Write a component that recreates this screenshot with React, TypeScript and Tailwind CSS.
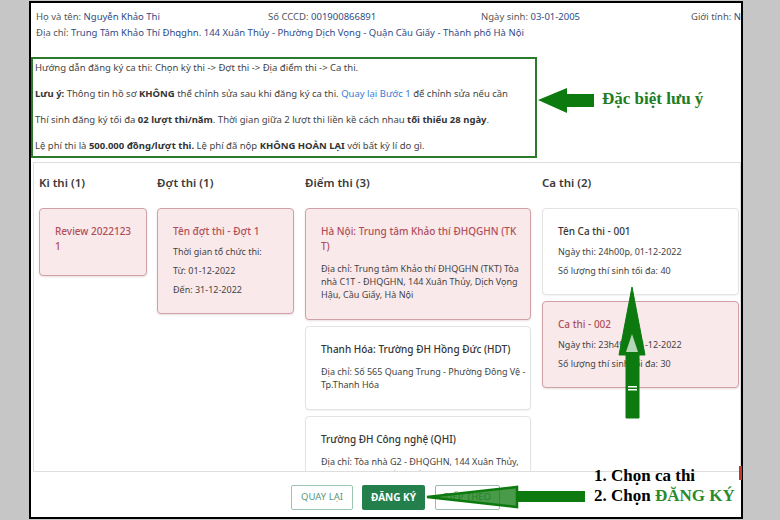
import React from 'react';
import clsx from 'clsx';

type CardProps = {
  title: React.ReactNode;
  lines?: React.ReactNode[];
  active?: boolean;
  loose?: boolean;
  className?: string;
};

function Card({ title, lines = [], active, loose, className }: CardProps) {
  return (
    <div
      className={clsx(
        'rounded-[4px] border px-[15px] pt-[15px] whitespace-nowrap',
        loose ? 'pb-[18px]' : 'pb-[17px]',
        active
          ? 'bg-[#f9e9eb] border-[#cfa1a7] shadow-[0_1px_2px_rgba(120,40,50,0.15)]'
          : 'bg-white border-[#e3e3e3] shadow-[0_1px_2px_rgba(0,0,0,0.06)]',
        className,
      )}
    >
      <div
        className={clsx(
          'text-[10px] leading-[15px] font-medium',
          active ? 'text-[#b04f59]' : 'text-[#353535]',
        )}
      >
        {title}
      </div>
      {lines.map((l, i) => (
        <p key={i} className={clsx('text-[9px] leading-[13px] text-[#444]', loose ? 'mt-[8px]' : 'mt-[6px]')}>
          {l}
        </p>
      ))}
    </div>
  );
}

function Column({ label, width, children }: { label: string; width: string; children: React.ReactNode }) {
  return (
    <div className={clsx('flex flex-col shrink-0', width)}>
      <div className="h-[16px] leading-[16px] text-[11.5px] font-semibold text-[#3a3a3a]">{label}</div>
      <div className="mt-[17px] flex flex-col gap-[6px]">{children}</div>
    </div>
  );
}

export default function App() {
  return (
    <div className="relative w-[780px] h-[520px] overflow-hidden bg-[#c6c6c6] pl-[29px] pt-px font-['Noto_Sans','Open_Sans',sans-serif]">
      <div className="w-[714px] h-[518px] border-2 border-black bg-white flex flex-col overflow-hidden">
        {/* thông tin thí sinh */}
        <div className="pt-[6px] pl-[5px] text-[9.5px] leading-[16px] text-[#555] whitespace-nowrap overflow-hidden">
          <div className="flex">
            <div className="w-[232px] shrink-0">
              Họ và tên: <span className="text-[#2f4a86]">Nguyễn Khảo Thi</span>
            </div>
            <div className="w-[213px] shrink-0">
              Số CCCD: <span className="text-[#2f4a86]">001900866891</span>
            </div>
            <div className="w-[210px] shrink-0">
              Ngày sinh: <span className="text-[#2f4a86]">03-01-2005</span>
            </div>
            <div className="shrink-0">
              Giới tính: <span className="text-[#2f4a86]">Nam</span>
            </div>
          </div>
          <div>
            Địa chỉ:{' '}
            <span className="text-[#2f4a86]">
              Trung Tâm Khảo Thí Đhqghn. 144 Xuân Thủy - Phường Dịch Vọng - Quận Cầu Giấy - Thành phố Hà Nội
            </span>
          </div>
        </div>

        {/* hướng dẫn */}
        <div className="mt-[16px] w-[506px] border-2 border-[#2c7a2c] pl-[2px] pt-[2px] pb-[3px] flex flex-col gap-[12px] text-[9.5px] leading-[14px] text-[#444] whitespace-nowrap">
          <p>Hướng dẫn đăng ký ca thi: Chọn kỳ thi -&gt; Đợt thi -&gt; Địa điểm thi -&gt; Ca thi.</p>
          <p>
            <b className="text-[#333]">Lưu ý:</b> Thông tin hồ sơ <b className="text-[#333]">KHÔNG</b> thể chỉnh sửa sau
            khi đăng ký ca thi. <span className="text-[#3a7bd5]">Quay lại Bước 1</span> để chỉnh sửa nếu cần
          </p>
          <p>
            Thí sinh đăng ký tối đa <b className="text-[#333]">02 lượt thi/năm</b>. Thời gian giữa 2 lượt thi liền kề cách
            nhau <b className="text-[#333]">tối thiểu 28 ngày</b>.
          </p>
          <p>
            Lệ phí thi là <b className="text-[#333]">500.000 đồng/lượt thi.</b> Lệ phí đã nộp{' '}
            <b className="text-[#333]">KHÔNG HOÀN LẠI</b> với bất kỳ lí do gì.
          </p>
        </div>

        {/* chọn ca thi */}
        <div className="mt-[4px] ml-[2px] w-[708px] h-[310px] shrink-0 border border-[#dedede] overflow-hidden pl-[5px] pt-[12px] flex">
          <Column label="Kì thi (1)" width="w-[108px] mr-[10px]">
            <Card
              active
              className="min-h-[68px]"
              title={
                <>
                  Review 2022123
                  <br />1
                </>
              }
            />
          </Column>
          <Column label="Đợt thi (1)" width="w-[137px] mr-[11px]">
            <Card
              active
              title="Tên đợt thi - Đợt 1"
              lines={['Thời gian tổ chức thi:', 'Từ: 01-12-2022', 'Đến: 31-12-2022']}
            />
          </Column>
          <Column label="Điểm thi (3)" width="w-[226px] mr-[11px]">
            <Card
              active
              loose
              title={
                <>
                  Hà Nội: Trung tâm Khảo thí ĐHQGHN (TK
                  <br />
                  T)
                </>
              }
              lines={[
                <>
                  Địa chỉ: Trung tâm Khảo thí ĐHQGHN (TKT) Tòa
                  <br />
                  nhà C1T - ĐHQGHN, 144 Xuân Thủy, Dịch Vọng
                  <br />
                  Hậu, Cầu Giấy, Hà Nội
                </>,
              ]}
            />
            <Card
              loose
              title="Thanh Hóa: Trường ĐH Hồng Đức (HDT)"
              lines={[
                <>
                  Địa chỉ: Số 565 Quang Trung - Phường Đông Vệ -
                  <br />
                  Tp.Thanh Hóa
                </>,
              ]}
            />
            <Card
              loose
              title="Trường ĐH Công nghệ (QHI)"
              lines={[
                <>
                  Địa chỉ: Tòa nhà G2 - ĐHQGHN, 144 Xuân Thủy,
                  <br />
                  Dịch Vọng Hậu, Cầu Giấy, Hà Nội
                </>,
              ]}
            />
          </Column>
          <Column label="Ca thi (2)" width="w-[197px]">
            <Card
              title="Tên Ca thi - 001"
              lines={['Ngày thi: 24h00p, 01-12-2022', 'Số lượng thí sinh tối đa: 40']}
            />
            <Card
              active
              title="Ca thi - 002"
              lines={['Ngày thi: 23h49p, 31-12-2022', 'Số lượng thí sinh tối đa: 30']}
            />
          </Column>
        </div>

        {/* nút */}
        <div className="mt-[13px] pl-[260px] flex gap-[9px] text-[9.5px]">
          <button className="w-[62px] h-[25px] border border-[#9cc6b0] text-[#5a977a] rounded-[2px]">QUAY LẠI</button>
          <button className="w-[63px] h-[25px] bg-[#23804d] text-white text-[10px] font-bold rounded-[2px]">ĐĂNG KÝ</button>
          <button className="ml-px w-[65px] h-[25px] border border-[#9bbcab] text-[#5a977a] rounded-[2px]">TIẾP THEO</button>
        </div>
      </div>

      {/* chú thích */}
      <svg className="absolute left-[536px] top-[85px]" width="60" height="30" viewBox="0 0 60 30">
        <polygon points="2,15 31,3 31,9 58,9 58,22 31,22 31,28" fill="#0c7a0e" />
      </svg>
      <div className="absolute left-[602px] top-[88px] text-[17px] leading-[22px] font-bold text-[#1f7d23] font-['Liberation_Serif','Times_New_Roman',serif]">
        Đặc biệt lưu ý
      </div>

      <svg className="absolute left-[615px] top-[284px]" width="34" height="136" viewBox="0 0 34 136">
        <polygon points="17,3 30,71 24,71 24,134 11,134 11,71 4,71" fill="#0c7a0e" stroke="#0c7a0e" strokeWidth="1" />
        <polygon points="17,50 23,68 11,68" fill="#ffffff" fillOpacity="0.7" />
        <rect x="13" y="102" width="9" height="1.5" fill="#ffffff" />
        <rect x="13" y="105" width="9" height="1.5" fill="#ffffff" />
      </svg>

      <svg className="absolute left-[424px] top-[484px]" width="164" height="26" viewBox="0 0 164 26">
        <polygon points="3,13 93,3 93,23" fill="#0c7a0e" fillOpacity="0.75" stroke="#0c7a0e" strokeWidth="2.5" />
        <rect x="92" y="7" width="69" height="11" fill="#0c7a0e" />
      </svg>

      <div className="absolute left-[594px] top-[466px] text-[17px] leading-[20px] font-bold text-black font-['Liberation_Serif','Times_New_Roman',serif]">
        <div>1. Chọn ca thi</div>
        <div>
          2. Chọn <span className="text-[#2a8a2e]">ĐĂNG KÝ</span>
        </div>
      </div>
      <div className="absolute left-[739px] top-[466px] w-[3px] h-[14px] bg-[#c0392b]" />
    </div>
  );
}
